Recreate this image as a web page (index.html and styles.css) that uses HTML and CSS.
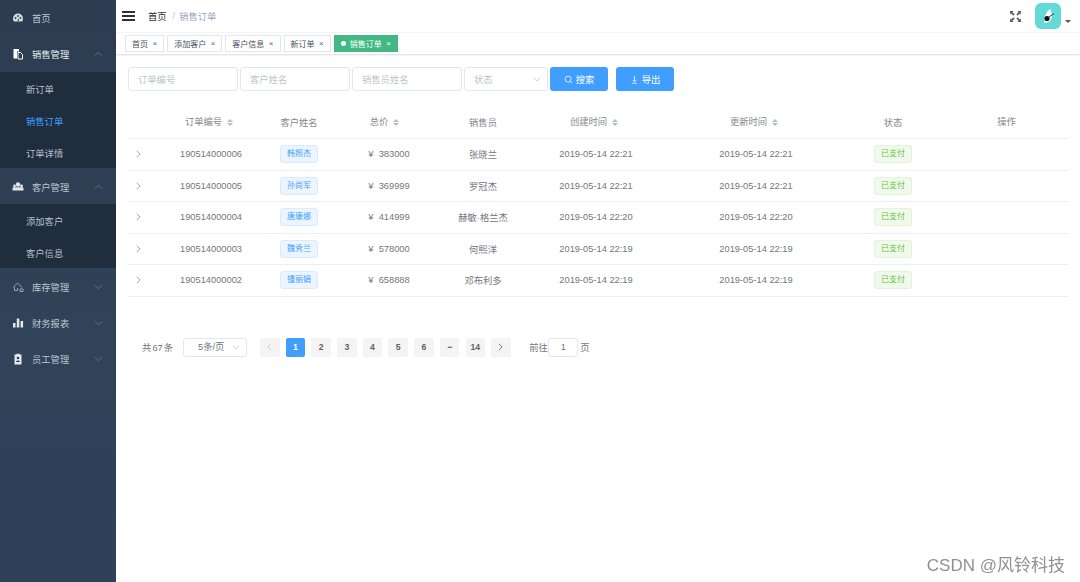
FILE: index.html
```html
<!DOCTYPE html>
<html lang="zh">
<head>
<meta charset="utf-8">
<title>销售订单</title>
<link rel="stylesheet" href="styles.css">
</head>
<body>
<div class="app">
  <aside class="sidebar">
    <div class="menu-item">
      <svg class="mi" viewBox="0 0 12 12"><path d="M6 1.500a5 5 0 0 0-5 5c0 1.300.4 2.400 1 3h8c.6-.6 1-1.700 1-3a5 5 0 0 0-5-5z" fill="#d5dae0"/><circle cx="3.500" cy="6" r=".9" fill="#304156"/><circle cx="6" cy="4" r=".9" fill="#304156"/><circle cx="8.500" cy="6" r=".9" fill="#304156"/><path d="M5.500 9l1-3 .5 3z" fill="#304156"/></svg>
      <span>首页</span>
    </div>
    <div class="menu-item bright">
      <svg class="mi" viewBox="0 0 12 12"><path d="M1.500 1h5.500v2.500H5v7H1.500z" fill="#fff"/><path d="M6 4.500h2.500l2 2v4.500H6z" fill="none" stroke="#fff"/></svg>
      <span>销售管理</span>
      <svg class="chev" viewBox="0 0 10 6"><path d="M1 5l4-4 4 4"/></svg>
    </div>
    <div class="submenu">
      <div class="sub-item">新订单</div>
      <div class="sub-item active">销售订单</div>
      <div class="sub-item">订单详情</div>
    </div>
    <div class="menu-item low">
      <svg class="mi" viewBox="0 0 12 12"><circle cx="6" cy="3.500" r="2.200" fill="#e2e5e9"/><circle cx="2.500" cy="5" r="1.400" fill="#e2e5e9"/><circle cx="9.500" cy="5" r="1.400" fill="#e2e5e9"/><path d="M.5 9.500v-2c0-.8.800-1.200 1.500-1.200h8c.7 0 1.500.4 1.500 1.200v2z" fill="#e2e5e9"/></svg>
      <span>客户管理</span>
      <svg class="chev" viewBox="0 0 10 6"><path d="M1 5l4-4 4 4"/></svg>
    </div>
    <div class="submenu">
      <div class="sub-item">添加客户</div>
      <div class="sub-item">客户信息</div>
    </div>
    <div class="menu-item low">
      <svg class="mi" viewBox="0 0 12 12"><path d="M1 6.500L5.500 2 10 6.500M2.500 6v3.500h3V7M8 8h3v2.500H8z" fill="none" stroke="#98a2ae"/></svg>
      <span>库存管理</span>
      <svg class="chev" viewBox="0 0 10 6"><path d="M1 1l4 4 4-4"/></svg>
    </div>
    <div class="menu-item low">
      <svg class="mi" viewBox="0 0 12 12"><path d="M1 6h2.500v4.500H1zM4.800 1.500h2.500v9H4.800zM8.600 4h2.500v6.500H8.600z" fill="#e6e9ec"/></svg>
      <span>财务报表</span>
      <svg class="chev" viewBox="0 0 10 6"><path d="M1 1l4 4 4-4"/></svg>
    </div>
    <div class="menu-item low">
      <svg class="mi" viewBox="0 0 12 12"><path d="M2.500 1.500h2V.8h3v.7h2v10h-7z" fill="#e6e9ec"/><circle cx="6" cy="5" r="1.300" fill="#304156"/><path d="M4 9c0-2 4-2 4 0z" fill="#304156"/></svg>
      <span>员工管理</span>
      <svg class="chev" viewBox="0 0 10 6"><path d="M1 1l4 4 4-4"/></svg>
    </div>
  </aside>

  <main class="main">
    <header class="navbar">
      <div class="burger"><i></i><i></i><i></i></div>
      <nav class="crumbs"><b>首页</b><em>/</em><span>销售订单</span></nav>
      <div class="nav-right">
        <svg class="fullscreen" viewBox="0 0 12 12"><path d="M1 1h3.200L3.200 2l2 2-1.200 1.200-2-2-1 1zM11 1v3.200l-1-1-2 2L6.800 4l2-2-1-1zM1 11V7.800l1 1 2-2L5.200 8l-2 2 1 1zM11 11H7.800l1-1-2-2L8 6.800l2 2 1-1z" fill="#5a5e66"/></svg>
        <div class="avatar">
          <svg viewBox="0 0 26 26"><path d="M15 6c-4 3-6 8-6 14l5-1c3-3 4-8 1-13z" fill="#fff"/><circle cx="12" cy="15.500" r="2.600" fill="#111"/><path d="M14 14l5-3.500" stroke="#333" fill="none"/></svg>
        </div>
        <i class="caret"></i>
      </div>
    </header>

    <div class="tags">
      <div class="tag">首页<s>×</s></div>
      <div class="tag">添加客户<s>×</s></div>
      <div class="tag">客户信息<s>×</s></div>
      <div class="tag">新订单<s>×</s></div>
      <div class="tag on"><u></u>销售订单<s>×</s></div>
    </div>

    <section class="content">
      <div class="filters">
        <div class="field w110">订单编号</div>
        <div class="field w110">客户姓名</div>
        <div class="field w110">销售员姓名</div>
        <div class="field w84">状态<svg class="down" viewBox="0 0 10 6"><path d="M1 1l4 4 4-4"/></svg></div>
        <button class="btn"><svg viewBox="0 0 12 12"><circle cx="5.500" cy="5.500" r="4"/><path d="M8.500 8.500l2.500 2.500"/></svg>搜索</button>
        <button class="btn gap"><svg viewBox="0 0 12 12"><path d="M6 1v8M3.500 6.500L6 9l2.500-2.500M2.500 11h7"/></svg>导出</button>
      </div>

      <table class="grid">
        <colgroup>
          <col class="c0"><col class="c1"><col class="c2"><col class="c3"><col class="c4"><col class="c5"><col class="c6"><col class="c7"><col class="c8">
        </colgroup>
        <thead>
          <tr>
            <th></th>
            <th class="srt">订单编号<i class="sort"></i></th>
            <th>客户姓名</th>
            <th class="srt price">总价<i class="sort"></i></th>
            <th>销售员</th>
            <th class="srt">创建时间<i class="sort"></i></th>
            <th class="srt">更新时间<i class="sort"></i></th>
            <th>状态</th>
            <th class="srt">操作</th>
          </tr>
        </thead>
        <tbody>
          <tr>
            <td class="exp"><svg viewBox="0 0 6 10"><path d="M1 1l4 4-4 4"/></svg></td>
            <td>190514000006</td><td><span class="chip">韩照杰</span></td><td>¥&nbsp; 383000</td><td>张晓兰</td>
            <td>2019-05-14 22:21</td><td>2019-05-14 22:21</td><td><span class="chip ok">已支付</span></td><td></td>
          </tr>
          <tr>
            <td class="exp"><svg viewBox="0 0 6 10"><path d="M1 1l4 4-4 4"/></svg></td>
            <td>190514000005</td><td><span class="chip">孙尚军</span></td><td>¥&nbsp; 369999</td><td>罗冠杰</td>
            <td>2019-05-14 22:21</td><td>2019-05-14 22:21</td><td><span class="chip ok">已支付</span></td><td></td>
          </tr>
          <tr>
            <td class="exp"><svg viewBox="0 0 6 10"><path d="M1 1l4 4-4 4"/></svg></td>
            <td>190514000004</td><td><span class="chip">唐康娜</span></td><td>¥&nbsp; 414999</td><td>赫敏·格兰杰</td>
            <td>2019-05-14 22:20</td><td>2019-05-14 22:20</td><td><span class="chip ok">已支付</span></td><td></td>
          </tr>
          <tr>
            <td class="exp"><svg viewBox="0 0 6 10"><path d="M1 1l4 4-4 4"/></svg></td>
            <td>190514000003</td><td><span class="chip">魏秀兰</span></td><td>¥&nbsp; 578000</td><td>何熙洋</td>
            <td>2019-05-14 22:19</td><td>2019-05-14 22:19</td><td><span class="chip ok">已支付</span></td><td></td>
          </tr>
          <tr>
            <td class="exp"><svg viewBox="0 0 6 10"><path d="M1 1l4 4-4 4"/></svg></td>
            <td>190514000002</td><td><span class="chip">锺丽娟</span></td><td>¥&nbsp; 658888</td><td>邓布利多</td>
            <td>2019-05-14 22:19</td><td>2019-05-14 22:19</td><td><span class="chip ok">已支付</span></td><td></td>
          </tr>
        </tbody>
      </table>

      <div class="pager">
        <span class="total">共 67 条</span>
        <div class="size">5条/页<svg class="down" viewBox="0 0 10 6"><path d="M1 1l4 4 4-4"/></svg></div>
        <div class="pages">
          <div class="pg dim"><svg viewBox="0 0 6 10"><path d="M5 1L1 5l4 4"/></svg></div>
          <div class="pg cur">1</div>
          <div class="pg">2</div>
          <div class="pg">3</div>
          <div class="pg">4</div>
          <div class="pg">5</div>
          <div class="pg">6</div>
          <div class="pg more">•••</div>
          <div class="pg">14</div>
          <div class="pg"><svg viewBox="0 0 6 10"><path d="M1 1l4 4-4 4"/></svg></div>
        </div>
        <div class="jump">前往<span class="jump-box">1</span>页</div>
      </div>
    </section>
  </main>
</div>
<div class="watermark">CSDN @风铃科技</div>
</body>
</html>
```
FILE: styles.css
```css
* { box-sizing: border-box; }
html, body { margin: 0; height: 100%; overflow: hidden; }
body {
  font-family: "Liberation Sans", "Noto Sans CJK SC", sans-serif;
  font-size: 9.3px;
  color: #606266;
  background: #fff;
}
.app { display: flex; height: 582px; }

/* sidebar */
.sidebar {
  width: 116px;
  flex: none;
  background: linear-gradient(#2d3c50, #304359 60%, #2f4058);
  color: #bcc4cd;
}
.menu-item {
  height: 36px;
  display: flex;
  align-items: center;
  padding: 0 12px;
}
.menu-item.low { padding-top: 2px; }
.menu-item span { margin-left: 8px; }
.menu-item.bright { color: #e9ecef; }
.mi { width: 12px; height: 12px; flex: none; }
.chev {
  width: 9px;
  height: 6px;
  margin-left: auto;
  margin-right: 1px;
  fill: none;
  stroke: #66768a;
  stroke-width: 1;
}
.submenu { background: #1f2d3d; }
.sub-item { height: 32px; line-height: 36px; padding-left: 26px; color: #b4bfcc; }
.sub-item.active { color: #409eff; }

/* main */
.main { flex: 1; min-width: 0; display: flex; flex-direction: column; }
.navbar { height: 32px; display: flex; align-items: center; padding-left: 6px; flex: none; }
.burger { width: 13px; display: flex; flex-direction: column; gap: 2px; }
.burger i { height: 2px; background: #303133; display: block; }
.crumbs { margin-left: 13px; display: flex; align-items: center; }
.crumbs b { font-weight: 400; color: #303133; }
.crumbs em { font-style: normal; color: #c0c4cc; margin: 0 4px 0 6px; }
.crumbs span { color: #97a8be; }
.nav-right { margin-left: auto; display: flex; align-items: center; padding-right: 9px; }
.fullscreen { width: 13px; height: 13px; margin-right: 13px; }
.avatar { width: 26px; height: 26px; border-radius: 6px; background: #63dad7; }
.avatar svg { display: block; width: 26px; height: 26px; }
.caret {
  margin: 10px 0 0 4px;
  width: 0;
  height: 0;
  border: 3px solid transparent;
  border-top-color: #555;
  border-bottom: 0;
}

.tags {
  height: 22px;
  flex: none;
  display: flex;
  align-items: flex-start;
  gap: 3px;
  padding: 2px 0 0 9px;
  border-top: 1px solid #f4f5f6;
  box-shadow: 0 1px 2px rgba(0, 0, 0, .14);
}
.tag {
  height: 17px;
  padding: 0 6px;
  border: 1px solid #e2e6ee;
  color: #495060;
  font-size: 8px;
  display: flex;
  align-items: center;
  white-space: nowrap;
}
.tag s { text-decoration: none; margin-left: 4.500px; color: #606266; font-size: 8px; }
.tag.on { background: #42b983; border-color: #42b983; color: #fff; }
.tag.on s { color: #fff; }
.tag.on u { width: 5px; height: 5px; border-radius: 50%; background: #fff; margin-right: 4px; }

.content { flex: 1; padding: 13px 12px 0 12px; }
.filters { display: flex; gap: 2px; height: 24px; }
.field {
  height: 24px;
  border: 1px solid #e4e7ed;
  border-radius: 3px;
  padding: 0 9px;
  line-height: 24px;
  color: #c0c4cc;
  position: relative;
  flex: none;
}
.w110 { width: 110px; }
.w84 { width: 84px; }
.down {
  position: absolute;
  right: 6px;
  top: 9px;
  width: 8px;
  height: 5px;
  fill: none;
  stroke: #c0c4cc;
}
.btn {
  width: 58px;
  height: 24px;
  border: 0;
  border-radius: 3px;
  background: #409eff;
  color: #fff;
  font: inherit;
  display: flex;
  align-items: center;
  justify-content: center;
  gap: 3px;
  padding: 0;
}
.btn.gap { margin-left: 6px; }
.btn svg { width: 9px; height: 9px; fill: none; stroke: #fff; stroke-width: 1; }

.grid {
  width: 940px;
  table-layout: fixed;
  border-collapse: collapse;
  margin-top: 14px;
}
.c0 { width: 25px; }
.c1 { width: 116px; }
.c2 { width: 60px; }
.c3 { width: 120px; }
.c4 { width: 68px; }
.c5 { width: 158px; }
.c6 { width: 162px; }
.c7 { width: 112px; }
.c8 { width: 119px; }
.grid th {
  height: 33.5px;
  font-weight: 400;
  color: #85888e;
  border-bottom: 1px solid #ebeef5;
  padding: 0;
  text-align: center;
}
.grid th.srt { padding: 0 4px 2px 0; }
.grid th.srt.price { padding-right: 9px; }
.grid td {
  height: 31.5px;
  padding: 0;
  text-align: center;
  border-bottom: 1px solid #ebeef5;
  color: #73767c;
  white-space: nowrap;
}
.sort {
  display: inline-flex;
  flex-direction: column;
  gap: 1px;
  width: 6px;
  margin-left: 5px;
  vertical-align: middle;
}
.sort::before, .sort::after {
  content: "";
  width: 0;
  height: 0;
  border-left: 3px solid transparent;
  border-right: 3px solid transparent;
}
.sort::before { border-bottom: 3px solid #b4bccc; }
.sort::after { border-top: 3px solid #b4bccc; }
.exp { text-align: left !important; padding-left: 8px !important; }
.exp svg { width: 5px; height: 8px; fill: none; stroke: #8b8f96; display: block; }
.chip {
  display: inline-block;
  width: 38px;
  height: 18px;
  line-height: 16px;
  border: 1px solid #d9ecff;
  background: #ecf5ff;
  color: #409eff;
  border-radius: 3px;
  font-size: 8px;
}
.chip.ok { background: #f0f9eb; border-color: #e1f3d8; color: #67c23a; }

.pager { display: flex; align-items: center; margin: 41px 0 0 14px; height: 19px; color: #73767c; }
.total { width: 41px; flex: none; white-space: nowrap; word-spacing: -1.500px; }
.size {
  width: 64px;
  height: 19px;
  border: 1px solid #e4e7ed;
  border-radius: 3px;
  line-height: 17px;
  position: relative;
  padding-left: 14px;
  flex: none;
}
.size .down { top: 6px; }
.pages { display: flex; gap: 6.200px; margin-left: 13px; flex: none; }
.pg {
  width: 19.500px;
  height: 19px;
  background: #f4f4f5;
  border-radius: 2px;
  color: #606266;
  font-weight: 700;
  font-size: 8.700px;
  display: flex;
  align-items: center;
  justify-content: center;
}
.pg.more { font-size: 5.500px; letter-spacing: -.5px; }
.pg svg { width: 5px; height: 8px; fill: none; stroke: #606266; }
.pg.dim svg { stroke: #c0c4cc; }
.pg.cur { background: #409eff; color: #fff; }
.jump { margin-left: 18.500px; display: flex; align-items: center; flex: none; }
.jump-box {
  width: 30px;
  height: 19px;
  border: 1px solid #e4e7ed;
  border-radius: 3px;
  line-height: 17px;
  text-align: center;
  margin: 0 2px 0 .5px;
}

.watermark {
  position: fixed;
  right: 15px;
  bottom: 6px;
  font-size: 17px;
  color: #909090;
  white-space: nowrap;
}
```
